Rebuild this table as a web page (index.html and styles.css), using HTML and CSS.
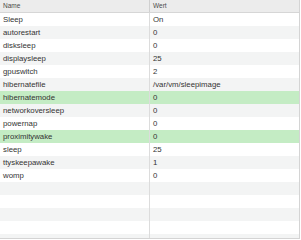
FILE: index.html
```html
<!DOCTYPE html>
<html>
<head>
<meta charset="utf-8">
<link rel="stylesheet" href="styles.css">
</head>
<body>
<div class="table">
  <div class="head">
    <div class="cell name">Name</div>
    <div class="cell val">Wert</div>
  </div>
  <div class="rows">
    <div class="row"><div class="cell name">Sleep</div><div class="cell val">On</div></div>
    <div class="row"><div class="cell name">autorestart</div><div class="cell val">0</div></div>
    <div class="row"><div class="cell name">disksleep</div><div class="cell val">0</div></div>
    <div class="row"><div class="cell name">displaysleep</div><div class="cell val">25</div></div>
    <div class="row"><div class="cell name">gpuswitch</div><div class="cell val">2</div></div>
    <div class="row"><div class="cell name">hibernatefile</div><div class="cell val">/var/vm/sleepimage</div></div>
    <div class="row hl"><div class="cell name">hibernatemode</div><div class="cell val">0</div></div>
    <div class="row"><div class="cell name">networkoversleep</div><div class="cell val">0</div></div>
    <div class="row"><div class="cell name">powernap</div><div class="cell val">0</div></div>
    <div class="row hl"><div class="cell name">proximitywake</div><div class="cell val">0</div></div>
    <div class="row"><div class="cell name">sleep</div><div class="cell val">25</div></div>
    <div class="row"><div class="cell name">ttyskeepawake</div><div class="cell val">1</div></div>
    <div class="row"><div class="cell name">womp</div><div class="cell val">0</div></div>
    <div class="row"><div class="cell name"></div><div class="cell val"></div></div>
    <div class="row"><div class="cell name"></div><div class="cell val"></div></div>
    <div class="row"><div class="cell name"></div><div class="cell val"></div></div>
    <div class="row"><div class="cell name"></div><div class="cell val"></div></div>
    <div class="row"><div class="cell name"></div><div class="cell val"></div></div>
  </div>
</div>
</body>
</html>
```
FILE: styles.css
```css
html, body {
  margin: 0;
  padding: 0;
  background: #ffffff;
}
body {
  font-family: "Liberation Sans", Arial, sans-serif;
  color: #333333;
}
.table {
  width: 299px;
  height: 238px;
  border-right: 1px solid #d4d4d4;
  border-bottom: 1px solid #d4d4d4;
  overflow: hidden;
  display: flex;
  flex-direction: column;
}
.head {
  display: flex;
  height: 12px;
  background: #ececec;
  border-bottom: 1px solid #d6d6d6;
  flex: none;
}
.head .cell {
  font-size: 6.5px;
  color: #4a4a4a;
  line-height: 12px;
}
.rows {
  display: flex;
  flex-direction: column;
}
.row {
  display: flex;
  height: 13px;
  flex: none;
}
.row:nth-child(even) {
  background: #f3f4f4;
}
.row.hl {
  background: #c4ecc4;
}
.cell {
  font-size: 7.8px;
  line-height: 13px;
  white-space: nowrap;
  overflow: hidden;
}
.name {
  width: 150px;
  padding-left: 3px;
  box-sizing: border-box;
  border-right: 1px solid #dcdcdc;
  flex: none;
}
.head .name {
  border-right-color: #d0d0d0;
}
.val {
  flex: 1;
  padding-left: 3px;
}
```
